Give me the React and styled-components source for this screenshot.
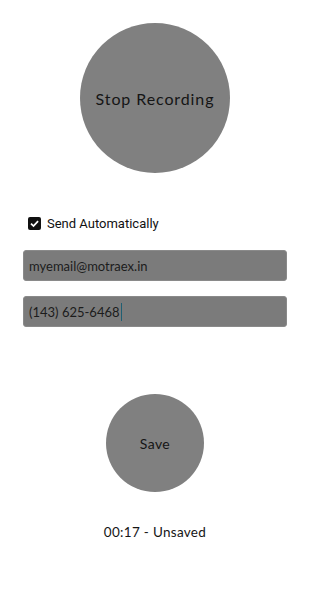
import React from 'react'
import styled, { createGlobalStyle } from 'styled-components'

const Global = createGlobalStyle`
  html, body { margin: 0; padding: 0; background: #ffffff; }
  body { font-family: Lato, "Noto Sans", sans-serif; color: #1c1c1c; }
`

const Page = styled.div`
  width: 310px;
  height: 592px;
  display: flex;
  flex-direction: column;
  align-items: center;
  padding-top: 23px;
  box-sizing: border-box;
`

const Circle = styled.div`
  width: ${p => p.size}px;
  height: ${p => p.size}px;
  margin-top: ${p => p.mt || 0}px;
  border-radius: 50%;
  background: #808080;
  display: flex;
  align-items: center;
  justify-content: center;
  font-size: ${p => p.fs}px;
  letter-spacing: ${p => p.ls}px;
  color: #151515;
  flex-shrink: 0;
`

const CheckRow = styled.label`
  align-self: stretch;
  display: flex;
  align-items: center;
  gap: 6px;
  margin: 43px 0 0 28px;
  font-family: Roboto, "Noto Sans", sans-serif;
  font-size: 13px;
  color: #111;
`

const Box = styled.span`
  width: 13px;
  height: 13px;
  border-radius: 2px;
  background: #111;
  display: flex;
  align-items: center;
  justify-content: center;
`

const Field = styled.div`
  width: 264px;
  height: 31px;
  box-sizing: border-box;
  border: 1px solid #8a8a8a;
  border-radius: 3px;
  background: #7b7b7b;
  display: flex;
  align-items: center;
  padding-left: 5px;
  font-size: 13px;
  color: #1c1c1c;
  margin-top: ${p => p.mt}px;
`

const Caret = styled.span`
  display: inline-block;
  width: 1.5px;
  height: 18px;
  background: #1f5f73;
  margin-left: 1px;
`

const Status = styled.div`
  margin-top: 32px;
  font-size: 13.5px;
  letter-spacing: 0.3px;
  color: #151515;
`

export default function App() {
  return (
    <Page>
      <Global />
      <Circle size={150} fs={16} ls={0.9}>Stop Recording</Circle>
      <CheckRow>
        <Box>
          <svg width="11" height="11" viewBox="0 0 12 12">
            <path d="M2.2 6.2 L4.9 8.8 L9.9 3.4" fill="none" stroke="#fff" strokeWidth="1.9" />
          </svg>
        </Box>
        Send Automatically
      </CheckRow>
      <Field mt={19}>myemail@motraex.in</Field>
      <Field mt={15}>(143) 625-6468<Caret /></Field>
      <Circle size={98} fs={14} ls={0.4} mt={67}>Save</Circle>
      <Status>00:17 - Unsaved</Status>
    </Page>
  )
}
